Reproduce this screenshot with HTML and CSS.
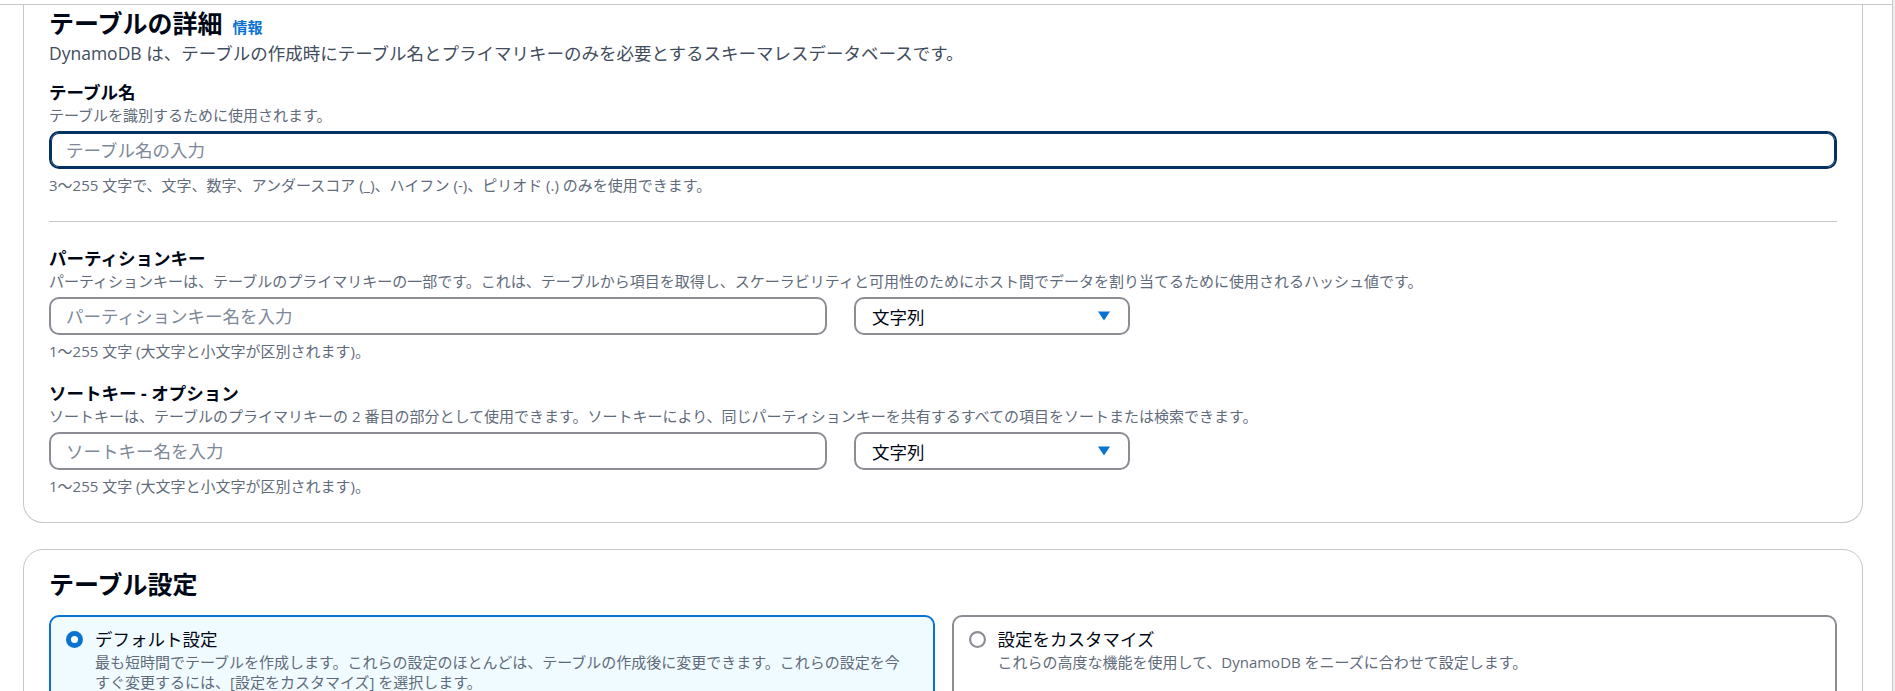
FILE: index.html
```html
<!DOCTYPE html>
<html lang="ja">
<head>
<meta charset="utf-8">
<title>テーブルの作成</title>
<link rel="stylesheet" href="styles.css">
</head>
<body>
<div class="page">
  <div class="main">
    <div class="topline"></div>

    <section class="card card-first">
      <h2 class="title">テーブルの詳細<a class="info">情報</a></h2>
      <p class="header-desc">DynamoDB は、テーブルの作成時にテーブル名とプライマリキーのみを必要とするスキーマレスデータベースです。</p>

      <div class="field field-first">
        <div class="label">テーブル名</div>
        <div class="desc">テーブルを識別するために使用されます。</div>
        <input class="input focused" type="text" placeholder="テーブル名の入力">
        <div class="constraint">3〜255 文字で、文字、数字、アンダースコア (_)、ハイフン (-)、ピリオド (.) のみを使用できます。</div>
      </div>

      <hr class="divider">

      <div class="field">
        <div class="label">パーティションキー</div>
        <div class="desc">パーティションキーは、テーブルのプライマリキーの一部です。これは、テーブルから項目を取得し、スケーラビリティと可用性のためにホスト間でデータを割り当てるために使用されるハッシュ値です。</div>
        <div class="key-row">
          <input class="input" type="text" placeholder="パーティションキー名を入力">
          <div class="select"><span>文字列</span><svg class="caret" width="12" height="10" viewBox="0 0 12 10"><path d="M0 0.5 H12 L6 9.5 Z" fill="#0972d3"/></svg></div>
        </div>
        <div class="constraint">1〜255 文字 (大文字と小文字が区別されます)。</div>
      </div>

      <div class="field field-sort">
        <div class="label">ソートキー - オプション</div>
        <div class="desc">ソートキーは、テーブルのプライマリキーの 2 番目の部分として使用できます。ソートキーにより、同じパーティションキーを共有するすべての項目をソートまたは検索できます。</div>
        <div class="key-row">
          <input class="input" type="text" placeholder="ソートキー名を入力">
          <div class="select"><span>文字列</span><svg class="caret" width="12" height="10" viewBox="0 0 12 10"><path d="M0 0.5 H12 L6 9.5 Z" fill="#0972d3"/></svg></div>
        </div>
        <div class="constraint">1〜255 文字 (大文字と小文字が区別されます)。</div>
      </div>
    </section>

    <section class="card card-second">
      <h2 class="title">テーブル設定</h2>
      <div class="tiles">
        <div class="tile selected">
          <svg class="radio" width="17" height="17" viewBox="0 0 16 16"><circle cx="8" cy="8" r="8" fill="#0972d3"/><circle cx="8" cy="8" r="3.3" fill="#ffffff"/></svg>
          <div class="tile-body">
            <div class="tile-title">デフォルト設定</div>
            <div class="tile-desc">最も短時間でテーブルを作成します。これらの設定のほとんどは、テーブルの作成後に変更できます。これらの設定を今すぐ変更するには、[設定をカスタマイズ] を選択します。</div>
          </div>
        </div>
        <div class="tile">
          <svg class="radio" width="17" height="17" viewBox="0 0 16 16"><circle cx="8" cy="8" r="7" fill="#ffffff" stroke="#8c8c94" stroke-width="2"/></svg>
          <div class="tile-body">
            <div class="tile-title">設定をカスタマイズ</div>
            <div class="tile-desc">これらの高度な機能を使用して、DynamoDB をニーズに合わせて設定します。</div>
          </div>
        </div>
      </div>
    </section>
  </div>
  <div class="scrollbar"></div>
</div>
</body>
</html>
```

FILE: styles.css
```css
* {
  box-sizing: border-box;
}

html,
body {
  margin: 0;
  padding: 0;
  background: #ffffff;
}

body {
  font-family: "Open Sans", "Noto Sans CJK JP", sans-serif;
  color: #000716;
}

.page {
  display: flex;
  height: 691px;
  overflow: hidden;
}

.main {
  flex: 1;
  padding: 0 29px 0 23px;
}

.scrollbar {
  width: 3px;
  border-left: 1px solid #c6c6cd;
  background: #f0f0f0;
}

.topline {
  height: 5px;
  border-bottom: 1px solid #c6c6cd;
  margin: 0 -29px 0 -23px;
}

.card {
  border: 1px solid #c6c6cd;
  border-radius: 20px;
  padding: 19px 25px 26px 25px;
  background: #ffffff;
}

.card-first {
  border-top: none;
  border-radius: 0 0 20px 20px;
  padding-top: 3px;
}

.card-second {
  margin-top: 26px;
}

.title {
  margin: 0;
  font-size: 25px;
  line-height: 30px;
  font-weight: 700;
  color: #000716;
  display: flex;
  align-items: baseline;
}

.info {
  font-size: 15px;
  line-height: 20px;
  font-weight: 700;
  color: #0972d3;
  margin-left: 10px;
}

.header-desc {
  margin: 3px 0 0 0;
  font-size: 17.5px;
  line-height: 25px;
  color: #414d5c;
}

.field-first {
  margin-top: 14px;
}

.field-sort {
  margin-top: 20px;
}

.label {
  font-size: 17.5px;
  line-height: 25px;
  font-weight: 700;
  color: #000716;
}

.desc,
.constraint {
  font-size: 15px;
  line-height: 20px;
  color: #5f6b7a;
}

.constraint {
  margin-top: 6px;
}

.input {
  display: block;
  width: 100%;
  height: 38px;
  margin: 6px 0 0 0;
  border: 2px solid #8c8c94;
  border-radius: 10px;
  padding: 0 15px;
  font-family: "Open Sans", "Noto Sans CJK JP", sans-serif;
  font-size: 17.5px;
  color: #000716;
  background: #ffffff;
  outline: none;
}

.input::placeholder {
  color: #7d8998;
}

.input.focused {
  border-color: #033160;
  box-shadow: inset 0 0 0 1px #033160;
}

.key-row {
  display: grid;
  grid-template-columns: 778px 276px;
  column-gap: 27px;
  margin-top: 6px;
}

.key-row .input {
  margin-top: 0;
}

.select {
  height: 38px;
  border: 2px solid #8c8c94;
  border-radius: 10px;
  padding: 0 18px 0 16px;
  display: flex;
  align-items: center;
  justify-content: space-between;
  font-size: 17.5px;
  color: #000716;
}

.caret {
  display: block;
}

.divider {
  border: none;
  border-top: 1px solid #c6c6cd;
  height: 0;
  margin: 26px 0 24px 0;
}

.tiles {
  display: grid;
  grid-template-columns: 1fr 1fr;
  column-gap: 17px;
  margin-top: 16px;
}

.tile {
  display: flex;
  align-items: flex-start;
  border: 2px solid #8c8c94;
  border-radius: 10px;
  padding: 10px 26px 10px 15px;
  background: #ffffff;
}

.tile.selected {
  border-color: #0972d3;
  background: #f0fbff;
}

.radio {
  flex: none;
  margin-top: 4px;
  margin-right: 12px;
}

.tile-title {
  font-size: 17.5px;
  line-height: 25px;
  color: #000716;
}

.tile-desc {
  font-size: 15px;
  line-height: 20px;
  color: #5f6b7a;
}
```
